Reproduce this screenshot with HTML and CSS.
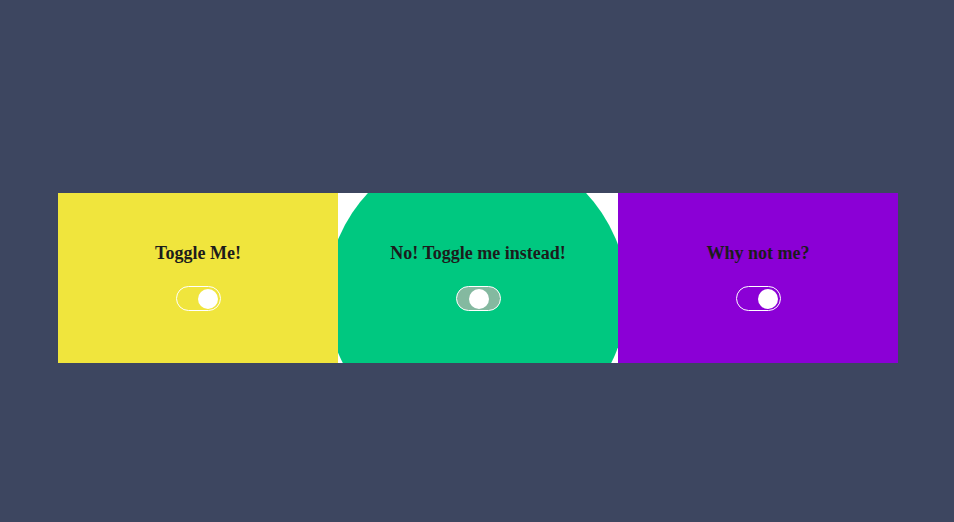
FILE: index.html
```html
<!DOCTYPE html>
<html lang="en">
<head>
<meta charset="utf-8">
<title>Toggles</title>
<link rel="stylesheet" href="styles.css">
</head>
<body>
<main class="stage">
  <div class="cards">
    <section class="card card-yellow">
      <h2 class="card-title">Toggle Me!</h2>
      <div class="toggle toggle-on"><span class="knob"></span></div>
    </section>
    <section class="card card-green">
      <span class="ripple"></span>
      <h2 class="card-title">No! Toggle me instead!</h2>
      <div class="toggle toggle-mid"><span class="knob"></span></div>
    </section>
    <section class="card card-purple">
      <h2 class="card-title">Why not me?</h2>
      <div class="toggle toggle-on"><span class="knob"></span></div>
    </section>
  </div>
</main>
</body>
</html>
```
FILE: styles.css
```css
* { box-sizing: border-box; }
html, body {
  margin: 0;
  padding: 0;
  height: 100%;
}
body {
  background: #3d4660;
  font-family: "Liberation Serif", "Times New Roman", serif;
  overflow: hidden;
}
.stage {
  height: 100%;
  padding: 193px 0 0 58px;
}
.cards {
  display: flex;
  width: 840px;
  height: 170px;
}
.card {
  position: relative;
  width: 280px;
  height: 170px;
  overflow: hidden;
  display: flex;
  flex-direction: column;
  align-items: center;
  padding-top: 50px;
}
.card-yellow { background: #f0e53d; }
.card-green { background: #ffffff; }
.card-purple { background: #8b00d6; }
.ripple {
  position: absolute;
  left: -11px;
  top: -47px;
  width: 300px;
  height: 300px;
  border-radius: 50%;
  background: #00c880;
}
.card-title {
  position: relative;
  margin: 0;
  font-size: 18px;
  font-weight: bold;
  line-height: 21px;
  color: #1c1c1c;
}
.toggle {
  position: relative;
  margin-top: 22px;
  width: 45px;
  height: 25px;
  border: 1px solid #ffffff;
  border-radius: 13px;
  display: flex;
  align-items: center;
  padding: 0 1.5px;
}
.toggle-on { justify-content: flex-end; }
.toggle-mid {
  background: #84b9a0;
  padding-left: 12px;
}
.knob {
  width: 20px;
  height: 20px;
  border-radius: 50%;
  background: #ffffff;
}
```
